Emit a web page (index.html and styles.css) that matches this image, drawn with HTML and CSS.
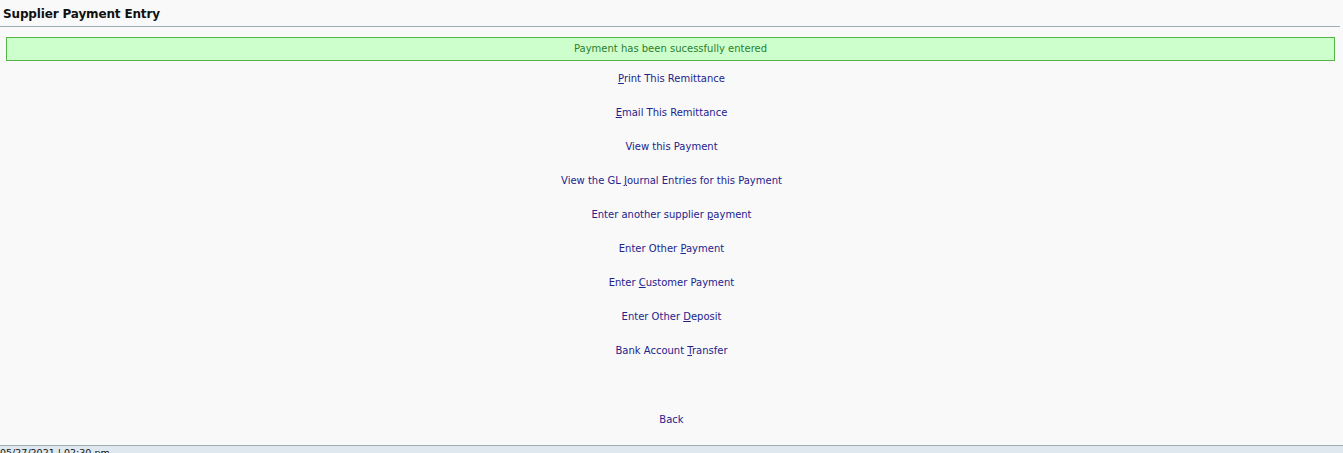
FILE: index.html
```html
<!DOCTYPE html>
<html>
<head>
<meta charset="utf-8">
<title>Supplier Payment Entry</title>
<link rel="stylesheet" href="styles.css">
</head>
<body>
<div class="page">
  <h1 class="title">Supplier Payment Entry</h1>
  <div class="msg">Payment has been sucessfully entered</div>
  <nav class="links">
    <a class="row" href="#"><u>P</u>rint This Remittance</a>
    <a class="row" href="#"><u>E</u>mail This Remittance</a>
    <a class="row" href="#">View this Payment</a>
    <a class="row" href="#">View the GL <u>J</u>ournal Entries for this Payment</a>
    <a class="row" href="#">Enter another supplier <u>p</u>ayment</a>
    <a class="row" href="#">Enter Other <u>P</u>ayment</a>
    <a class="row" href="#">Enter <u>C</u>ustomer Payment</a>
    <a class="row" href="#">Enter Other <u>D</u>eposit</a>
    <a class="row" href="#">Bank Account <u>T</u>ransfer</a>
  </nav>
  <div class="back"><a class="row" href="#">Back</a></div>
</div>
<footer class="footer">05/27/2021 | 02:30 pm</footer>
</body>
</html>
```
FILE: styles.css
```css
html, body {
  margin: 0;
  padding: 0;
  background: #f9f9f9;
  font-family: "DejaVu Sans", Verdana, sans-serif;
  font-size: 10px;
}
.page {
  display: flex;
  flex-direction: column;
  height: 445px;
}
.title {
  margin: 0 3px 0 0;
  padding: 7px 0 0 3px;
  height: 19px;
  font-size: 12px;
  font-weight: bold;
  letter-spacing: -0.15px;
  color: #111;
  border-bottom: 1px solid #9eacb6;
}
.msg {
  margin: 10px 8px 0 6px;
  height: 22px;
  line-height: 22px;
  background: #ccffcc;
  border: 1px solid #55b544;
  color: #2e7d2e;
  text-align: center;
}
.links {
  display: flex;
  flex-direction: column;
  align-items: center;
  margin-top: 1px;
}
.row {
  display: block;
  height: 34px;
  line-height: 34px;
  color: #23238c;
  text-decoration: none;
  text-align: center;
}
.row u {
  text-decoration: underline;
}
.back {
  display: flex;
  justify-content: center;
  margin-top: 35px;
}
.footer {
  height: 7px;
  border-top: 1px solid #9eacb6;
  background: #dfe8ee;
  color: #111;
  font-size: 9.5px;
  line-height: 13px;
  overflow: hidden;
  white-space: nowrap;
}
```
